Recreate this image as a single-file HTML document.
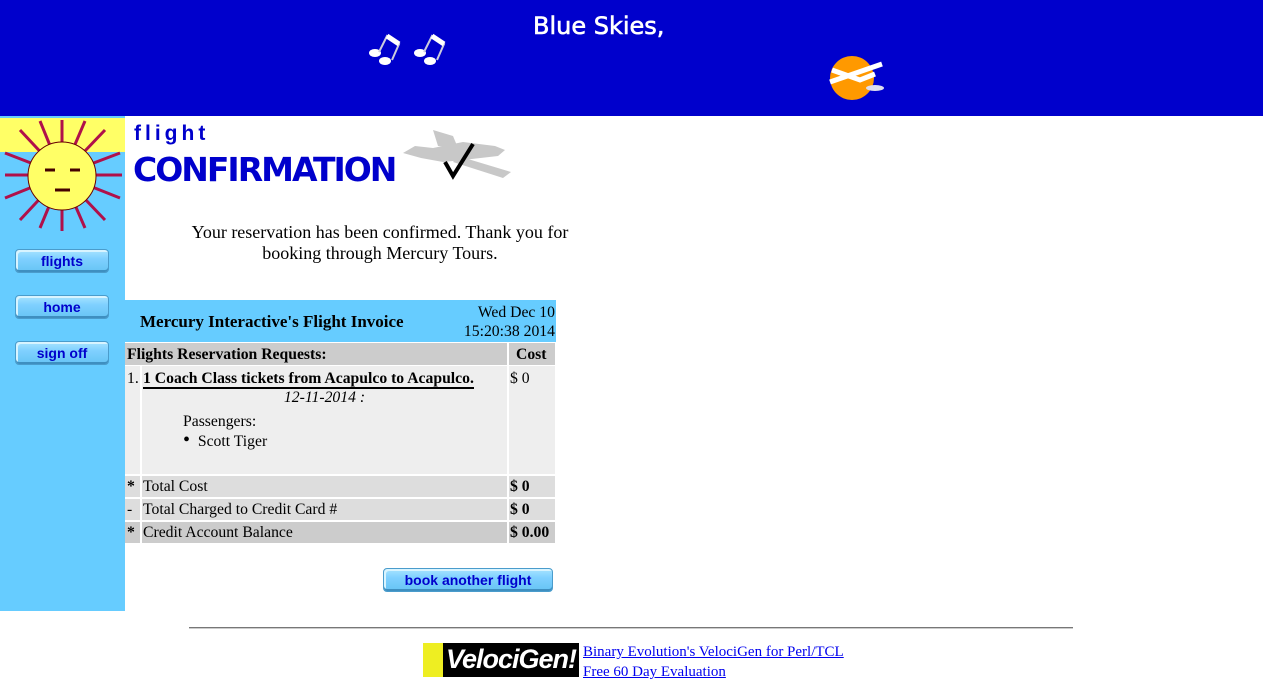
<!DOCTYPE html>
<html><head><meta charset="utf-8"><style>
body{margin:0;width:1280px;height:683px;position:relative;background:#fff;font-family:"Liberation Serif",serif;overflow:hidden}
.a{position:absolute}
.t{font-size:15.7px}
.btn{position:absolute;left:15px;width:94px;height:24px;background:linear-gradient(#a8e4ff,#7fd0ff 40%,#66c4f4);border:1px solid #4a9ccc;border-radius:4px;box-shadow:inset 0 -2px 0 #3e8fc0,inset 2px 2px 0 #d8f4ff;box-sizing:border-box;text-align:center;font:bold 14px "Liberation Sans",sans-serif;color:#0000cc;line-height:22px}
</style></head><body>
<div class="a" style="left:0;top:0;width:1263px;height:116px;background:#0000cc"></div>
<div class="a" style="left:533px;top:12px;color:#fff;font:24px 'DejaVu Sans',sans-serif;-webkit-text-stroke:0.6px #fff">Blue Skies,</div>
<svg class="a" style="left:365px;top:32px" width="95" height="38"><g fill="#fff" stroke="#ccd" stroke-width="2"><ellipse cx="10" cy="21" rx="6" ry="4" stroke="none"/><ellipse cx="20" cy="29" rx="6" ry="4" stroke="none"/><path d="M14 20 L22 4 L34 12 L27 28" fill="none"/><path d="M22 4 L34 12" stroke="#fff" stroke-width="5"/><ellipse cx="55" cy="21" rx="6" ry="4" stroke="none"/><ellipse cx="65" cy="29" rx="6" ry="4" stroke="none"/><path d="M59 20 L67 4 L79 12 L72 28" fill="none"/><path d="M67 4 L79 12" stroke="#fff" stroke-width="5"/></g></svg>
<svg class="a" style="left:820px;top:52px" width="70" height="52"><circle cx="32" cy="26" r="22" fill="#f90"/><path d="M10 30 L62 12 M12 18 L40 28 L55 22" stroke="#fff" stroke-width="5" fill="none"/><ellipse cx="55" cy="36" rx="9" ry="3" fill="#dde"/></svg>
<div class="a" style="left:0;top:116px;width:125px;height:495px;background:#66ccff"></div>
<div class="a" style="left:0;top:118px;width:125px;height:34px;background:#ffff66"></div>
<svg class="a" style="left:0;top:118px" width="125" height="115"><g stroke="#b0104a" stroke-width="3" fill="none">
<path d="M62 57 L62 2 M62 57 L62 113 M62 57 L5 57 M62 57 L122 57 M62 57 L20 12 M62 57 L105 12 M62 57 L20 102 M62 57 L105 102 M62 57 L40 3 M62 57 L85 3 M62 57 L40 110 M62 57 L85 110 M62 57 L5 35 M62 57 L120 35 M62 57 L5 80 M62 57 L120 80"/></g>
<circle cx="62" cy="58" r="34" fill="#ffff66" stroke="#600" stroke-width="1"/><g stroke="#400" stroke-width="3"><path d="M45 52 L55 52 M70 52 L80 52 M55 72 L70 72"/></g></svg>
<div class="btn" style="top:249px">flights</div>
<div class="btn" style="top:295px">home</div>
<div class="btn" style="top:341px">sign off</div>
<div class="a" style="left:134px;top:122px;color:#0000cc;font:bold 21px 'Liberation Sans',sans-serif;letter-spacing:4px">flight</div>
<div class="a" style="left:133px;top:150px;color:#0000cc;font:bold 33px 'DejaVu Sans',sans-serif;letter-spacing:-2px">CONFIRMATION</div>
<svg class="a" style="left:403px;top:128px" width="112" height="58"><g fill="#c8c8c8"><path d="M0 25 L12 18 L30 20 L60 14 L92 18 L102 22 L95 28 L60 32 L40 34 L18 30 Z"/><path d="M30 2 L50 8 L55 20 L35 18 Z"/><path d="M55 28 L108 44 L100 50 L50 34 Z"/></g><path d="M42 34 L50 48 L70 16" stroke="#000" stroke-width="4" fill="none"/></svg>
<div class="a" style="left:180px;top:222px;width:400px;text-align:center;font-size:18px;line-height:21px">Your reservation has been confirmed. Thank you for booking through Mercury Tours.</div>
<div class="a" style="left:125px;top:300px;width:431px;height:42px;background:#66ccff"></div>
<div class="a" style="left:140px;top:312px;font-weight:bold;font-size:17px">Mercury Interactive's Flight Invoice</div>
<div class="a t" style="left:440px;top:303px;width:115px;text-align:right;line-height:19px">Wed Dec 10<br>15:20:38 2014</div>
<div class="a" style="left:125px;top:343px;width:382px;height:22px;background:#ccc"></div>
<div class="a" style="left:509px;top:343px;width:46px;height:22px;background:#ccc"></div>
<div class="a t" style="left:127px;top:346px;font-weight:bold">Flights Reservation Requests:</div>
<div class="a t" style="left:516px;top:346px;font-weight:bold">Cost</div>
<div class="a" style="left:125px;top:366px;width:15px;height:108px;background:#eee"></div>
<div class="a" style="left:142px;top:366px;width:365px;height:108px;background:#eee"></div>
<div class="a" style="left:509px;top:366px;width:46px;height:108px;background:#eee"></div>
<div class="a t" style="left:127px;top:370px">1.</div>
<div class="a t" style="left:143px;top:370px;font-weight:bold;border-bottom:2px solid #000;line-height:17px">1 Coach Class tickets from Acapulco to Acapulco.</div>
<div class="a t" style="left:510px;top:370px">$ 0</div>
<div class="a t" style="left:142px;top:389px;width:365px;text-align:center;font-style:italic">12-11-2014 :</div>
<div class="a t" style="left:183px;top:413px">Passengers:</div>
<div class="a t" style="left:183px;top:433px"><span style="font-size:20px;line-height:15px">•</span>&nbsp; Scott Tiger</div>
<div class="a" style="left:125px;top:476px;width:15px;height:21px;background:#ddd"></div>
<div class="a" style="left:142px;top:476px;width:365px;height:21px;background:#ddd"></div>
<div class="a" style="left:509px;top:476px;width:46px;height:21px;background:#ddd"></div>
<div class="a" style="left:125px;top:499px;width:15px;height:21px;background:#ddd"></div>
<div class="a" style="left:142px;top:499px;width:365px;height:21px;background:#ddd"></div>
<div class="a" style="left:509px;top:499px;width:46px;height:21px;background:#ddd"></div>
<div class="a" style="left:125px;top:522px;width:15px;height:21px;background:#ccc"></div>
<div class="a" style="left:142px;top:522px;width:365px;height:21px;background:#ccc"></div>
<div class="a" style="left:509px;top:522px;width:46px;height:21px;background:#ccc"></div>
<div class="a t" style="left:127px;top:478px;font-weight:bold">*</div><div class="a t" style="left:143px;top:478px">Total Cost</div><div class="a t" style="left:510px;top:478px;font-weight:bold">$ 0</div>
<div class="a t" style="left:127px;top:501px">-</div><div class="a t" style="left:143px;top:501px">Total Charged to Credit Card #</div><div class="a t" style="left:510px;top:501px;font-weight:bold">$ 0</div>
<div class="a t" style="left:127px;top:524px;font-weight:bold">*</div><div class="a t" style="left:143px;top:524px">Credit Account Balance</div><div class="a t" style="left:510px;top:524px;font-weight:bold">$ 0.00</div>
<div class="btn" style="left:383px;top:568px;width:170px">book another flight</div>
<div class="a" style="left:189px;top:627px;width:884px;height:0;border-top:1px solid #777;border-bottom:1px solid #ccc"></div>
<div class="a" style="left:423px;top:643px;width:156px;height:34px;background:#000"></div>
<div class="a" style="left:423px;top:643px;width:20px;height:34px;background:#ee2"></div>
<div class="a" style="left:446px;top:644px;color:#fff;font:italic bold 27px 'Liberation Sans',sans-serif;letter-spacing:-1px">VelociGen!</div>
<div class="a" style="left:583px;top:642px;font-size:15px;line-height:20px"><a href="#" style="color:#00e">Binary Evolution's VelociGen for Perl/TCL</a><br><a href="#" style="color:#00e">Free 60 Day Evaluation</a></div>
</body></html>
